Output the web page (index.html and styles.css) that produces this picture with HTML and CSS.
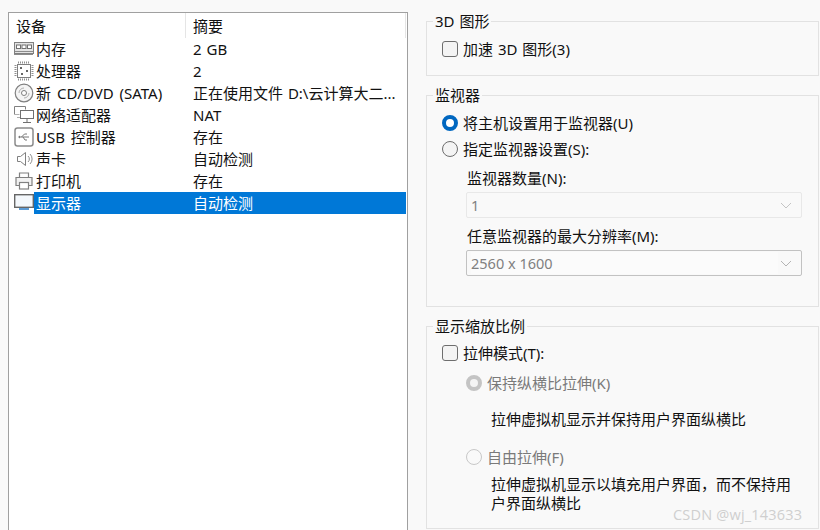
FILE: index.html
```html
<!DOCTYPE html>
<html lang="zh-CN">
<head>
    <meta charset="UTF-8">
    <title>显示器设置</title>
    <link rel="stylesheet" href="styles.css">
</head>
<body>
    <div class="device-panel">
        <div class="device-head">
            <span class="col-device">设备</span>
            <span class="col-summary">摘要</span>
        </div>

        <div class="device-row">
            <svg class="icon" viewBox="0 0 20 14"><rect x="0.5" y="0.5" width="19" height="11" fill="#e4e4e4" stroke="#808080"/><rect x="2.5" y="3" width="4" height="3.5" fill="#fff" stroke="#707070" stroke-width="1"/><rect x="8" y="3" width="4" height="3.5" fill="#fff" stroke="#707070" stroke-width="1"/><rect x="13.5" y="3" width="4" height="3.5" fill="#fff" stroke="#707070" stroke-width="1"/><path d="M1 9.5h18M0 12.5h19" stroke="#8c8c8c"/></svg>
            <span class="name">内存</span><span class="value">2 GB</span>
        </div>
        <div class="device-row">
            <svg class="icon" viewBox="0 0 20 20"><rect x="3.5" y="3.5" width="13" height="13" fill="#fff" stroke="#808080"/><path d="M4 1.5h12M4 18.5h12M1.5 4v12M18.5 4v12" stroke="#909090" stroke-width="2" stroke-dasharray="1 1"/><rect x="6" y="6" width="2" height="2" fill="#666"/><rect x="12" y="9" width="2" height="2" fill="#666"/><rect x="7" y="12" width="2" height="2" fill="#666"/></svg>
            <span class="name">处理器</span><span class="value">2</span>
        </div>
        <div class="device-row">
            <svg class="icon" viewBox="0 0 20 20"><circle cx="10" cy="10" r="8.8" fill="#f4f4f4" stroke="#808080" stroke-width="1.2"/><circle cx="10" cy="10" r="2.5" fill="#fff" stroke="#808080"/><path d="M5 10a5 5 0 0 1 5-5M15 10a5 5 0 0 1-5 5" fill="none" stroke="#b0b0b0"/></svg>
            <span class="name">新 CD/DVD (SATA)</span><span class="value">正在使用文件 D:\云计算大二...</span>
        </div>
        <div class="device-row">
            <svg class="icon" viewBox="0 0 20 20"><path d="M0.5 9.5v-8h11v3" fill="none" stroke="#808080"/><path d="M0.5 9.5h5M3 12.5h3" stroke="#b0b0b0"/><rect x="6.5" y="5.5" width="13" height="8" fill="#fff" stroke="#707070"/><path d="M13 14v3M9 17.5h8" stroke="#707070"/></svg>
            <span class="name">网络适配器</span><span class="value">NAT</span>
        </div>
        <div class="device-row">
            <svg class="icon" viewBox="0 0 20 20"><rect x="1" y="1" width="18" height="18" rx="2.5" fill="#fff" stroke="#8c8c8c" stroke-width="1.5"/><path d="M5 10h10M7.5 10l3-3h2.5M9 10l2 3h2" fill="none" stroke="#777"/><path d="M4 10l2-1.5v3z" fill="#777"/></svg>
            <span class="name">USB 控制器</span><span class="value">存在</span>
        </div>
        <div class="device-row">
            <svg class="icon" viewBox="0 0 20 20"><path d="M3.5 7.5h3l5-4v13l-5-4h-3z" fill="#fff" stroke="#808080"/><path d="M14 7a4 4 0 0 1 0 6M16 5a7 7 0 0 1 0 10" fill="none" stroke="#909090"/></svg>
            <span class="name">声卡</span><span class="value">自动检测</span>
        </div>
        <div class="device-row">
            <svg class="icon" viewBox="0 0 20 20"><path d="M5.5 6.5v-4.500h9v4.500" fill="#fff" stroke="#808080" stroke-width="1.2"/><path d="M5 14.500h-3v-8h16v8h-3" fill="#f2f2f2" stroke="#808080" stroke-width="1.2"/><rect x="5.500" y="11.500" width="9" height="6.500" fill="#fff" stroke="#808080" stroke-width="1.2"/></svg>
            <span class="name">打印机</span><span class="value">存在</span>
        </div>
        <div class="device-row selected">
            <svg class="icon" viewBox="0 0 20 20"><rect x="0.7" y="1.7" width="18.6" height="12.6" fill="#f4f8fc" stroke="#666" stroke-width="1.4"/><path d="M5 16h10" stroke="#5b9bd5" stroke-width="2"/></svg>
            <span class="name">显示器</span><span class="value">自动检测</span>
        </div>
    </div>

    <div class="settings">
        <fieldset class="group group-3d">
            <legend>3D 图形</legend>
            <label class="option"><input type="checkbox">加速 3D 图形(3)</label>
        </fieldset>

        <fieldset class="group group-monitor">
            <legend>监视器</legend>
            <label class="option"><input type="radio" name="monitor" checked>将主机设置用于监视器(U)</label>
            <label class="option option-next"><input type="radio" name="monitor">指定监视器设置(S):</label>
            <div class="field-label">监视器数量(N):</div>
            <div class="combo faint"><span>1</span><svg class="arrow" viewBox="0 0 12 7"><path d="M1 1l5 5 5-5" fill="none" stroke="#c4c4c4"/></svg></div>
            <div class="field-label">任意监视器的最大分辨率(M):</div>
            <div class="combo"><span class="combo-value">2560 x 1600</span><svg class="arrow" viewBox="0 0 12 7"><path d="M1 1l5 5 5-5" fill="none" stroke="#b4b4b4"/></svg></div>
        </fieldset>

        <fieldset class="group group-scale">
            <legend>显示缩放比例</legend>
            <label class="option"><input type="checkbox">拉伸模式(T):</label>
            <label class="option sub disabled keep"><input type="radio" name="scale" checked disabled>保持纵横比拉伸(K)</label>
            <p class="desc desc-keep">拉伸虚拟机显示并保持用户界面纵横比</p>
            <label class="option sub disabled free"><input type="radio" name="scale" disabled>自由拉伸(F)</label>
            <p class="desc desc-free">拉伸虚拟机显示以填充用户界面，而不保持用户界面纵横比</p>
        </fieldset>
    </div>

    <div class="watermark">CSDN @wj_143633</div>
</body>
</html>
```

FILE: styles.css
```css
* { margin: 0; padding: 0; box-sizing: border-box; }
html, body { height: 530px; overflow: hidden; }
body {
    position: relative;
    display: flex; align-items: flex-start;
    background: #f9f9f9; color: #111;
    font-family: "Noto Sans", "Noto Sans CJK SC", sans-serif;
    font-size: 15px; word-spacing: 2px;
}

/* left list */
.device-panel {
    width: 400px; height: 530px; margin: 12px 0 0 8px;
    background: #fff; border: 1px solid #a0a0a0; border-bottom: none;
}
.device-head { display: flex; height: 25px; line-height: 26px; }
.col-device { width: 177px; padding-left: 7px; border-right: 1px solid #e5e5e5; height: 25px; }
.col-summary { flex: 1; padding-left: 7px; margin-right: 1px; border-right: 1px solid #e5e5e5; height: 25px; }
.device-row { display: flex; align-items: center; height: 22px; padding-left: 5px; }
.device-row .icon { width: 20px; height: 20px; flex: none; }
.device-row .name { width: 152px; padding-left: 2px; line-height: 22px; white-space: nowrap; flex: none; }
.device-row .value { flex: 1; padding-left: 7px; line-height: 22px; white-space: nowrap; word-spacing: 1px; }
.device-row.selected { padding-right: 1px; }
.device-row.selected .name, .device-row.selected .value { background: #0078d7; color: #fff; }

/* right side */
.settings { width: 393px; margin: 11px 0 0 18px; display: flex; flex-direction: column; gap: 9px; word-spacing: 1px; }
.group { border: 1.5px solid #e2e2e2; padding: 0 0 0 15px; }
.group legend { margin-left: -9px; padding: 0 2px; line-height: 20px; }
.group-3d { height: 65px; padding-top: 7px; }
.group-monitor { height: 222px; padding-top: 7px; }
.group-scale { height: 213px; padding-top: 6px; }

.option { display: flex; align-items: center; height: 22px; line-height: 22px; }
.option-next { margin-top: 4px; }
.option input {
    appearance: none; flex: none;
    width: 16px; height: 16px; margin-right: 5px;
    background: #f4f4f4; border: 1px solid #6e6e6e;
}
.option input[type="checkbox"] { border-radius: 3px; }
.option input[type="radio"] { border-radius: 50%; }
.option input[type="radio"]:checked { background: #fff; border: 4.5px solid #0067c0; }
.option input[type="radio"]:disabled { background: #f9f9f9; border-color: #c8c8c8; }
.option input[type="radio"]:checked:disabled { background: #f4f4f4; border: 4.5px solid #c4c4c4; }

.field-label { margin: 8px 0 0 25px; height: 20px; line-height: 20px; }
.field-label + .combo { margin-top: 4px; }
.combo {
    display: flex; align-items: center; justify-content: space-between;
    width: 336px; height: 26px; margin-left: 24px; padding: 0 1px 0 4px;
    border: 1px solid #c2c2c2; border-radius: 2px; color: #808080;
    font-size: 14.5px; word-spacing: 0;
}
.combo.faint { border-color: #e8e8e8; }
.combo-value { width: 307px; height: 22px; line-height: 22px; background: #fbfbfb; }
.arrow { width: 12px; height: 7px; margin-right: 8px; }

.sub { margin-left: 24px; }
.disabled { color: #7a7a7a; }
.keep { margin-top: 8px; }
.free { margin-top: 17px; }
.desc { margin-left: 49px; width: 305px; line-height: 19px; }
.desc-keep { margin-top: 16px; }
.desc-free { margin-top: 7px; }

.watermark {
    position: absolute; left: 673px; top: 505px;
    color: #cfcfcf; font-size: 14.5px; letter-spacing: 0.2px; word-spacing: 0;
    font-family: "Open Sans", sans-serif; white-space: nowrap;
}
```
